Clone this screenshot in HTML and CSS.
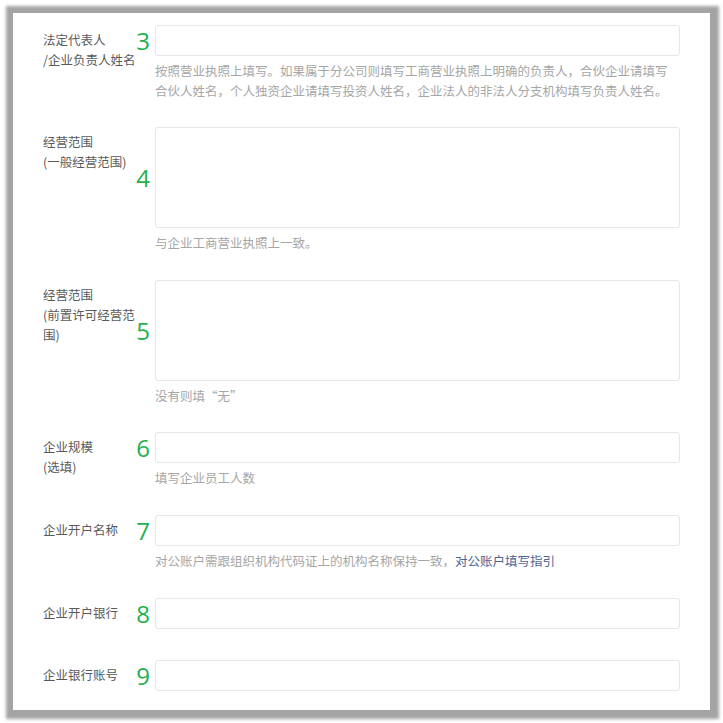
FILE: index.html
```html
<!DOCTYPE html>
<html lang="zh-CN">
<head>
<meta charset="utf-8">
<title>企业信息</title>
<link rel="stylesheet" href="styles.css">
</head>
<body>
<div class="panel">
  <div class="group tight">
    <div class="label">法定代表人<br>/企业负责人姓名</div>
    <div class="control">
      <div class="field"><span class="mark">3</span><div class="input"></div></div>
      <p class="help">按照营业执照上填写。如果属于分公司则填写工商营业执照上明确的负责人，合伙企业请填写<br>合伙人姓名，个人独资企业请填写投资人姓名，企业法人的非法人分支机构填写负责人姓名。</p>
    </div>
  </div>
  <div class="group">
    <div class="label">经营范围<br>(一般经营范围)</div>
    <div class="control">
      <div class="field"><span class="mark">4</span><div class="textarea"></div></div>
      <p class="help">与企业工商营业执照上一致。</p>
    </div>
  </div>
  <div class="group tight">
    <div class="label">经营范围<br>(前置许可经营范<br>围)</div>
    <div class="control">
      <div class="field"><span class="mark">5</span><div class="textarea"></div></div>
      <p class="help">没有则填“无”</p>
    </div>
  </div>
  <div class="group">
    <div class="label">企业规模<br>(选填)</div>
    <div class="control">
      <div class="field"><span class="mark">6</span><div class="input"></div></div>
      <p class="help">填写企业员工人数</p>
    </div>
  </div>
  <div class="group">
    <div class="label">企业开户名称</div>
    <div class="control">
      <div class="field"><span class="mark">7</span><div class="input"></div></div>
      <p class="help">对公账户需跟组织机构代码证上的机构名称保持一致，<a class="link" href="#">对公账户填写指引</a></p>
    </div>
  </div>
  <div class="group nohelp">
    <div class="label">企业开户银行</div>
    <div class="control">
      <div class="field"><span class="mark">8</span><div class="input"></div></div>
    </div>
  </div>
  <div class="group last">
    <div class="label">企业银行账号</div>
    <div class="control">
      <div class="field"><span class="mark">9</span><div class="input"></div></div>
    </div>
  </div>
</div>
</body>
</html>
```

FILE: styles.css
```css
html, body {
  margin: 0;
  padding: 0;
  background: #ffffff;
}

body {
  font-family: "Noto Sans CJK SC", "Noto Sans", sans-serif;
  padding: 13px;
}

.panel {
  width: 697px;
  height: 697px;
  box-sizing: border-box;
  background: #ffffff;
  padding: 12px 30px 0 30px;
  box-shadow: 1px 1px 3px 8px #a4a4a4;
}

.group {
  display: flex;
  margin-bottom: 27px;
}

.group.tight {
  margin-bottom: 26px;
}

.group.nohelp {
  margin-bottom: 31px;
}

.group.last {
  margin-bottom: 0;
}

.label {
  width: 112px;
  flex: none;
  box-sizing: border-box;
  padding-top: 5px;
  font-size: 12.5px;
  line-height: 20px;
  color: #5a5a5a;
}

.control {
  flex: 1;
  min-width: 0;
}

.field {
  position: relative;
}

.mark {
  position: absolute;
  right: 100%;
  margin-right: 5px;
  top: 50%;
  transform: translateY(-50%);
  font-family: "Open Sans", "Noto Sans", sans-serif;
  font-size: 24px;
  line-height: 30px;
  color: #22b14c;
}

.input,
.textarea {
  box-sizing: border-box;
  border: 1px solid #e6e6e6;
  border-radius: 3px;
  background: #ffffff;
}

.input {
  height: 31px;
}

.textarea {
  height: 101px;
}

.help {
  margin: 5px 0 0 0;
  font-size: 12.5px;
  line-height: 20px;
  color: #a6a6a6;
  white-space: nowrap;
}

.link {
  color: #4a6496;
  text-decoration: none;
}
```
